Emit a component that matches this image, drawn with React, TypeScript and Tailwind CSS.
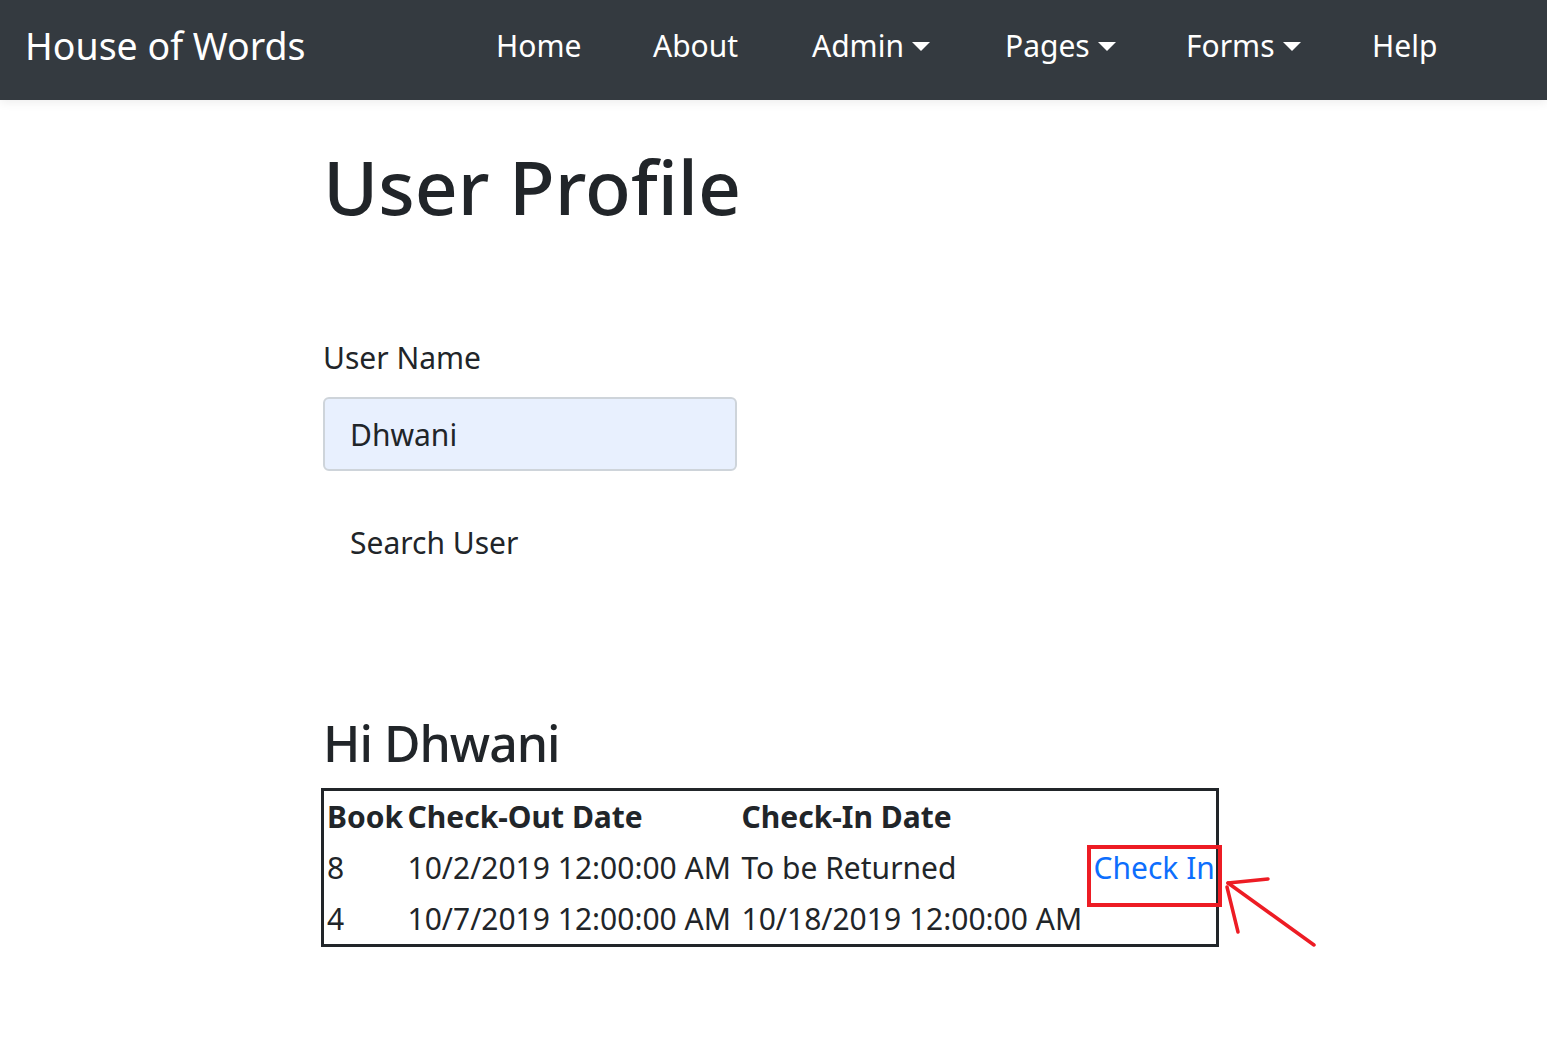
const font = { fontFamily: '"Noto Sans", "Open Sans", sans-serif' };

const links = [
  { label: "Home", w: "w-[157px]" },
  { label: "About", w: "w-[159px]" },
  { label: "Admin", w: "w-[193px]", caret: true },
  { label: "Pages", w: "w-[181px]", caret: true },
  { label: "Forms", w: "w-[186px]", caret: true },
  { label: "Help", w: "w-[120px]" },
];

const loans = [
  { book: "8", out: "10/2/2019 12:00:00 AM", back: "To be Returned", action: true },
  { book: "4", out: "10/7/2019 12:00:00 AM", back: "10/18/2019 12:00:00 AM", action: false },
];

function Navbar() {
  return (
    <nav className="flex h-[100px] items-center bg-[#343a40] pb-[9px] pl-[25px] shadow-[0_2px_10px_rgba(0,0,0,0.08)]">
      <a className="w-[471px] text-[37.5px] leading-[45px] text-white">House of Words</a>
      <ul className="flex items-center">
        {links.map((l) => (
          <li key={l.label} className={`${l.w} flex items-center text-[30px] leading-[45px] text-white`}>
            <span>{l.label}</span>
            {l.caret ? (
              <span className="ml-[8px] mt-[2px] h-0 w-0 border-x-[9px] border-t-[9px] border-x-transparent border-t-white" />
            ) : null}
          </li>
        ))}
      </ul>
    </nav>
  );
}

function LoanTable() {
  return (
    <div className="relative w-[898px]">
      <table className="w-[898px] border-collapse border-[3px] border-[#212529] text-[30px] text-[#212529]">
        <colgroup>
          <col className="w-[82px]" />
          <col className="w-[334px]" />
          <col className="w-[352px]" />
          <col />
        </colgroup>
        <thead>
          <tr className="h-[52px]">
            <th className="pl-[3px] text-left font-bold leading-[45px]">Book</th>
            <th className="pl-[3px] text-left font-bold leading-[45px]">Check-Out Date</th>
            <th className="pl-[3px] text-left font-bold leading-[45px]">Check-In Date</th>
            <th />
          </tr>
        </thead>
        <tbody>
          {loans.map((r) => (
            <tr key={r.out} className="h-[52px]">
              <td className="pl-[3px] leading-[45px]">{r.book}</td>
              <td className="pl-[3px] leading-[45px] whitespace-nowrap">{r.out}</td>
              <td className="pl-[3px] leading-[45px] whitespace-nowrap">{r.back}</td>
              <td className="pl-[3px] leading-[45px] whitespace-nowrap">
                {r.action ? <a className="text-[#0d6efd]">Check In</a> : null}
              </td>
            </tr>
          ))}
        </tbody>
      </table>
      {/* hand-drawn annotation on top of the screenshot */}
      <svg
        className="pointer-events-none absolute left-[760px] top-[50px]"
        width="240"
        height="120"
        viewBox="0 0 240 120"
      >
        <rect x="8" y="9" width="131" height="58" fill="none" stroke="#ed1c24" strokeWidth="4" />
        <g stroke="#ed1c24" strokeWidth="3.5" strokeLinecap="round" fill="none">
          <path d="M147 45 L233 107" />
          <path d="M147 45 L187 41" />
          <path d="M146 49 L157 94" />
        </g>
      </svg>
    </div>
  );
}

export default function App() {
  return (
    <div className="min-h-[1046px] bg-white text-[#212529]" style={font}>
      <Navbar />
      <main className="pl-[323px]">
        <h1 className="mt-[41px] text-[75px] font-medium leading-[90px]">User Profile</h1>
        <label className="mt-[104px] block text-[30px] leading-[45px]">User Name</label>
        <div className="mt-[17px] flex h-[74px] w-[414px] items-center rounded-[6px] border-2 border-[#ced4da] bg-[#e8f0fe] pl-[25px] text-[30px] text-[#212529]">
          Dhwani
        </div>
        <button className="mt-[49px] block pl-[27px] text-left text-[30px] leading-[45px] text-[#212529]">
          Search User
        </button>
        <h3 className="mt-[147px] text-[50px] font-medium leading-[62px] tracking-[-1px]">Hi Dhwani</h3>
        <div className="mt-[14px] -ml-[2px]">
          <LoanTable />
        </div>
      </main>
    </div>
  );
}
